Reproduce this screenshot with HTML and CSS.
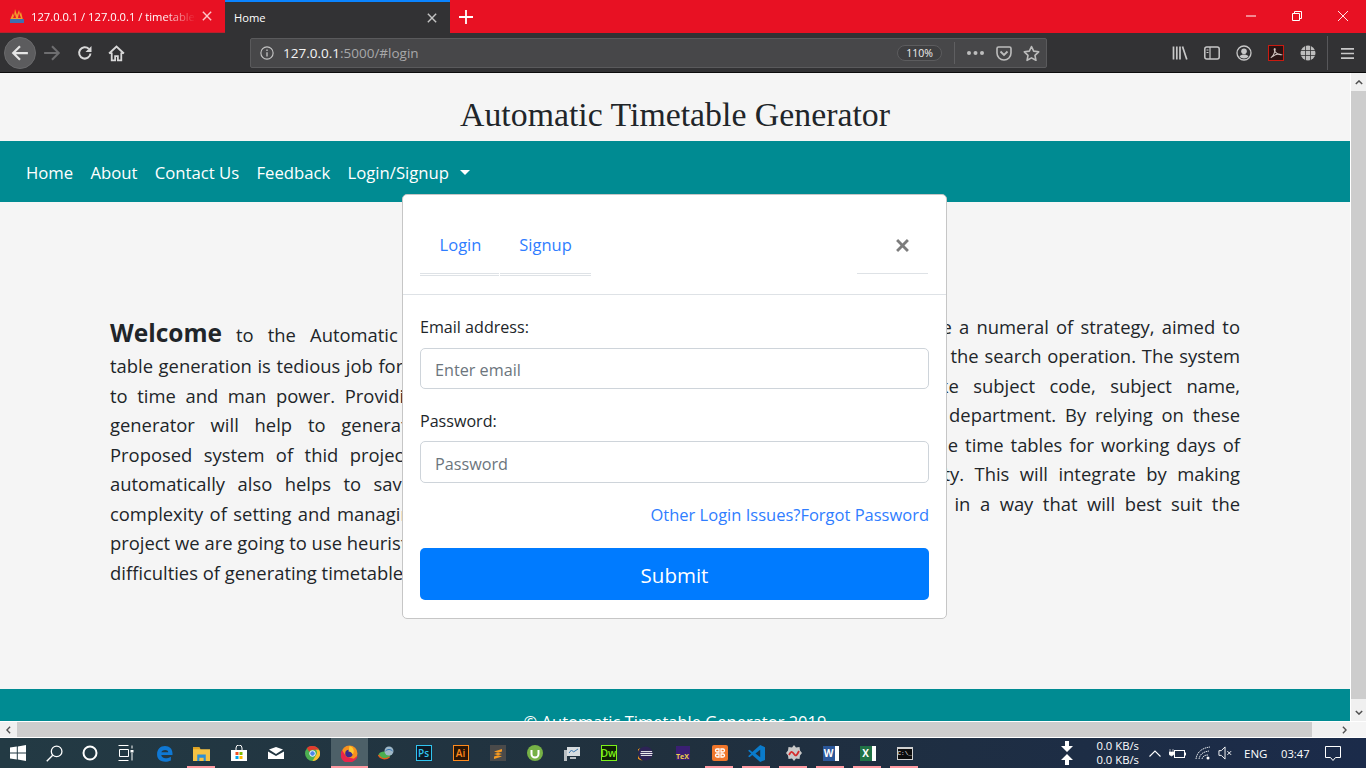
FILE: index.html
```html
<!DOCTYPE html>
<html lang="en">
<head>
<meta charset="utf-8">
<title>Home</title>
<link rel="stylesheet" href="styles.css">
</head>
<body>
<div class="screen">
  <div class="tabstrip">
    <div class="tab tab-bg">
      <svg class="favicon" viewBox="0 0 16 16"><path d="M1 12 4 5l1 3 1-7 2 6 2-5 1 4 1-2 2 8z" fill="#f39c2c"/><path d="M4 10 6 6l1 4zM9 10l1-5 2 5z" fill="#e8112d"/><rect x="1" y="11" width="14" height="4" fill="#3f6fb0"/></svg>
      <span class="tab-title fade">127.0.0.1 / 127.0.0.1 / timetables</span>
      <svg class="tab-x" viewBox="0 0 12 12"><path d="M1 1l10 10M11 1 1 11" stroke="#ffc4c8" stroke-width="1.7"/></svg>
    </div>
    <div class="tab tab-active">
      <span class="tab-title">Home</span>
      <svg class="tab-x" viewBox="0 0 12 12"><path d="M1 1l10 10M11 1 1 11" stroke="#c4c4c4" stroke-width="1.7"/></svg>
    </div>
    <svg class="newtab" viewBox="0 0 14 14"><path d="M7 0v14M0 7h14" stroke="#fff" stroke-width="1.8"/></svg>
    <div class="winctl">
      <span class="winbtn"><svg viewBox="0 0 10 10" width="10" height="10"><path d="M0 5h10" stroke="#fff"/></svg></span>
      <span class="winbtn"><svg viewBox="0 0 10 10" width="10" height="10"><path d="M.5 2.500h7v7h-7zM2.500 2.500v-2h7v7h-2" fill="none" stroke="#fff"/></svg></span>
      <span class="winbtn"><svg viewBox="0 0 10 10" width="10" height="10"><path d="M0 0l10 10M10 0 0 10" stroke="#fff" stroke-width=".9"/></svg></span>
    </div>
  </div>

  <div class="toolbar">
    <div class="navbtns">
      <span class="backbtn"><svg viewBox="0 0 16 16" width="18" height="18"><path d="M15 8H2M8 2 2 8l6 6" fill="none" stroke="#e6e6e6" stroke-width="2"/></svg></span>
      <span class="tbtn"><svg viewBox="0 0 16 16" width="18" height="18"><path d="M1 8h13M8 2l6 6-6 6" fill="none" stroke="#6e6e70" stroke-width="1.8"/></svg></span>
      <span class="tbtn tbtn-reload"><svg viewBox="0 0 16 16" width="16" height="16"><path d="M13.500 8.500a5.700 5.700 0 1 1-1.600-4.600" fill="none" stroke="#d8d8d8" stroke-width="2"/><path d="M14.500 1v6h-6z" fill="#d8d8d8"/></svg></span>
      <span class="tbtn"><svg viewBox="0 0 16 16" width="17" height="17"><path d="M1 8l7-6.500L15 8M3.500 7v7.500h3.200v-4h2.600v4h3.200V7" fill="none" stroke="#d8d8d8" stroke-width="1.7"/></svg></span>
    </div>
    <div class="urlbar">
      <svg class="url-info" viewBox="0 0 16 16" width="14" height="14"><circle cx="8" cy="8" r="7" fill="none" stroke="#c4c4c4" stroke-width="1.3"/><path d="M8 7v5M8 4v1.600" stroke="#c4c4c4" stroke-width="1.5"/></svg>
      <span class="url-text"><span class="url-host">127.0.0.1</span>:5000/#login</span>
      <span class="zoompill">110%</span>
      <span class="url-sep"></span>
      <svg class="url-dots" viewBox="0 0 17 4" width="17" height="4"><circle cx="2" cy="2" r="2" fill="#bdbdbd"/><circle cx="8.500" cy="2" r="2" fill="#bdbdbd"/><circle cx="15" cy="2" r="2" fill="#bdbdbd"/></svg>
      <svg class="url-pocket" viewBox="0 0 16 16" width="16" height="16"><path d="M1 3.500c0-1 .6-1.500 1.500-1.500h11c.9 0 1.500.5 1.500 1.500V8a7 7 0 0 1-14 0z" fill="none" stroke="#bdbdbd" stroke-width="1.600"/><path d="M4.500 6.500 8 10l3.500-3.500" fill="none" stroke="#bdbdbd" stroke-width="1.800"/></svg>
      <svg class="url-star" viewBox="0 0 18 18" width="17" height="17"><path d="M9 1.600l2.300 4.900 5.300.7-3.900 3.700 1 5.300L9 13.600l-4.700 2.600 1-5.300L1.400 7.200l5.300-.7z" fill="none" stroke="#bdbdbd" stroke-width="1.700" stroke-linejoin="round"/></svg>
    </div>
    <div class="tools">
      <span class="tool"><svg viewBox="0 0 16 16" width="16" height="16"><path d="M1.500 1.500v13M4.800 1.500v13M8 1.500v13M10.500 1.500l4.300 13" stroke="#c8c8c8" stroke-width="1.700" fill="none"/></svg></span>
      <span class="tool"><svg viewBox="0 0 16 16" width="16" height="16"><rect x=".8" y="2" width="14.400" height="12" rx="2" fill="none" stroke="#c8c8c8" stroke-width="1.500"/><path d="M6 2v12M2.500 5h2M2.500 7.500h2" stroke="#c8c8c8" stroke-width="1.200"/></svg></span>
      <span class="tool"><svg viewBox="0 0 16 16" width="16" height="16"><circle cx="8" cy="8" r="7" fill="none" stroke="#c8c8c8" stroke-width="1.300"/><circle cx="8" cy="6.300" r="2.800" fill="#c8c8c8"/><path d="M3.500 11.500c1-1.600 2.800-2.100 4.500-2.100s3.500.5 4.500 2.100c-1 1.300-2.700 2-4.500 2s-3.500-.7-4.500-2z" fill="#c8c8c8"/></svg></span>
      <span class="tool"><span class="pdf"><svg viewBox="0 0 16 16" width="14" height="14"><path d="M2 13.500c2-1 4-4.500 5-9 .3-1.500-.5-2-1-1-.5 2 3 7 8 6.500-3-1.500-7.500 0-10.500 2.500" fill="none" stroke="#d0c4c0" stroke-width="1.200"/></svg></span></span>
      <span class="tool"><svg viewBox="0 0 16 16" width="16" height="16"><circle cx="8" cy="8" r="7.500" fill="#bdbdbd"/><path d="M.5 5.500h15M.5 10.500h15M5.500.8v14.400M10.500.8v14.400" stroke="#323234" stroke-width=".8"/></svg></span>
      <span class="tool-sep"></span>
      <span class="tool"><svg viewBox="0 0 14 14" width="13" height="13"><path d="M0 2h14M0 7h14M0 12h14" stroke="#c8c8c8" stroke-width="1.800"/></svg></span>
    </div>
  </div>

  <div class="viewport">
    <div class="page">
      <header class="site-head"><h1 class="site-title">Automatic Timetable Generator</h1></header>
      <nav class="site-nav">
        <a class="nav-link">Home</a>
        <a class="nav-link">About</a>
        <a class="nav-link">Contact Us</a>
        <a class="nav-link">Feedback</a>
        <a class="nav-link">Login/Signup<span class="caret"></span></a>
      </nav>
      <main class="site-main">
        <div class="col col-left">
          <p class="ln ln-first"><strong class="welcome">Welcome</strong> to the Automatic Timetable Generator. Here</p>
          <p class="ln">table generation is tedious job for every educator of the college</p>
          <p class="ln">to time and man power. Providing the automatic time table</p>
          <p class="ln">generator will help to generate it automatically and so</p>
          <p class="ln">Proposed system of thid project is to make use of rooms</p>
          <p class="ln">automatically also helps to save time and also reduces it</p>
          <p class="ln">complexity of setting and managing timetable manually. In this</p>
          <p class="ln">project we are going to use heuristic approach to help tackle the</p>
          <p class="ln ln-last">difficulties of generating timetable.</p>
        </div>
        <div class="col col-right">
          <p class="ln">Our new tool can incorporate a numeral of strategy, aimed to</p>
          <p class="ln">that improve the efficiency of the search operation. The system</p>
          <p class="ln">will take various inputs like subject code, subject name,</p>
          <p class="ln">faculty and semester of the department. By relying on these</p>
          <p class="ln">inputs it will generate possible time tables for working days of</p>
          <p class="ln">the week for teaching faculty. This will integrate by making</p>
          <p class="ln">optimal use of all resources in a way that will best suit the</p>
          <p class="ln ln-last">constraints.</p>
        </div>
      </main>
      <footer class="site-foot">© Automatic Timetable Generator 2019</footer>

      <div class="modal">
        <div class="modal-head">
          <div class="mtabs">
            <a class="mtab mtab-login">Login</a>
            <a class="mtab mtab-signup">Signup</a>
          </div>
          <div class="mclose"><svg viewBox="0 0 12 12" width="13" height="13"><path d="M1 1l10 10M11 1 1 11" stroke="#7d7d7d" stroke-width="2.600"/></svg></div>
        </div>
        <form class="modal-body">
          <label class="flabel">Email address:</label>
          <input class="finput finput-email" type="text" placeholder="Enter email">
          <label class="flabel flabel-pw">Password:</label>
          <input class="finput finput-pw" type="password" placeholder="Password">
          <div class="flinks"><a>Other Login Issues?</a><a>Forgot Password</a></div>
          <button class="submit" type="button">Submit</button>
        </form>
      </div>
    </div>
    <div class="vscroll">
      <span class="sb-btn"><svg viewBox="0 0 10 6" width="8" height="5"><path d="M1 5l4-4 4 4" fill="none" stroke="#505050" stroke-width="1.800"/></svg></span>
      <span class="sb-thumb"></span>
      <span class="sb-btn"><svg viewBox="0 0 10 6" width="8" height="5"><path d="M1 1l4 4 4-4" fill="none" stroke="#505050" stroke-width="1.800"/></svg></span>
    </div>
  </div>

  <div class="hscroll">
    <span class="hb-btn"><svg viewBox="0 0 6 10" width="5" height="8"><path d="M5 1 1 5l4 4" fill="none" stroke="#505050" stroke-width="1.800"/></svg></span>
    <span class="hb-thumb"></span>
    <span class="hb-rest"><svg viewBox="0 0 6 10" width="5" height="8"><path d="M1 1l4 4-4 4" fill="none" stroke="#505050" stroke-width="1.800"/></svg></span>
    <span class="hb-corner"></span>
  </div>

  <div class="taskbar">
    <span class="sys"><svg viewBox="0 0 16 16" width="16" height="16"><path d="M0 2.500 6.800 1.500v6H0zM7.800 1.400 16 0v7.500H7.800zM0 8.500h6.800v6L0 13.500zM7.800 8.500H16V16l-8.200-1.400z" fill="#fff"/></svg></span>
    <span class="sys"><svg viewBox="0 0 16 16" width="17" height="17"><circle cx="10" cy="6" r="5" fill="none" stroke="#fff" stroke-width="1.200"/><path d="M6.300 9.700 .7 15.300" stroke="#fff" stroke-width="1.300"/></svg></span>
    <span class="sys"><svg viewBox="0 0 16 16" width="16" height="16"><circle cx="8" cy="8" r="6.500" fill="none" stroke="#fff" stroke-width="2"/></svg></span>
    <span class="sys"><svg viewBox="0 0 16 16" width="16" height="16"><path d="M.5.500h10M.5 15.500h10M1.500 4.500h9v7h-9zM14 .5v3M14 8v7.500" fill="none" stroke="#fff"/><rect x="12.500" y="5" width="3" height="2.500" fill="#fff"/></svg></span>
    <span class="apps">
      <span class="app"><svg viewBox="0 0 16 16" width="17" height="17"><path d="M1 9c0-5 3-8 7.500-8C13 1 16 4 15.500 9.500H5c.2 3 4.500 4 9 1.500v3.500c-5 2.500-13 1.500-13-5.500zM5 6.800h6.500C11.500 4 6 4 5 6.800z" fill="#0f78d4"/></svg></span>
      <span class="app app-open"><svg viewBox="0 0 16 14" width="17" height="15"><path d="M0 1h6l1 2h9v11H0z" fill="#f5c244"/><path d="M0 1h6l1 2H0z" fill="#e3a31f"/><path d="M4 8h8v6h-2v-3H6v3H4z" fill="#2d8fd5"/></svg></span>
      <span class="app"><svg viewBox="0 0 16 16" width="16" height="16"><path d="M0 5h16v11H0z" fill="#fff"/><path d="M5 5V3a3 3 0 0 1 6 0v2" fill="none" stroke="#fff"/><rect x="4.500" y="7" width="3" height="3" fill="#f25022"/><rect x="8.500" y="7" width="3" height="3" fill="#7fba00"/><rect x="4.500" y="11" width="3" height="3" fill="#00a4ef"/><rect x="8.500" y="11" width="3" height="3" fill="#ffb900"/></svg></span>
      <span class="app"><svg viewBox="0 0 16 12" width="16" height="12"><path d="M0 12V4.500L8 9l8-4.500V12zM1 2.500 8 0l7 2.500L8 7z" fill="#fff"/></svg></span>
      <span class="app"><svg viewBox="0 0 16 16" width="15" height="15"><circle cx="8" cy="8" r="8" fill="#4caf50"/><path d="M8 0a8 8 0 0 1 7 4H8a4 4 0 0 0-3.500 2L2 2a8 8 0 0 1 6-2z" fill="#e33b2e"/><path d="M15 4a8 8 0 0 1-7 12l3.500-6a4 4 0 0 0 0-6z" fill="#fbc02d"/><circle cx="8" cy="8" r="3" fill="#4a86e8" stroke="#fff"/></svg></span>
      <span class="app app-open app-current"><svg viewBox="0 0 16 16" width="17" height="17"><circle cx="8" cy="8" r="7.500" fill="#f7901e"/><path d="M1 5a7.500 7.500 0 0 0 11 10c2-1 3.500-3 3.500-5L12 13 5 11z" fill="#e8254b"/><circle cx="7.500" cy="8" r="3.500" fill="#3b2a8c"/><path d="M8 1c4 1 5 5 3 8-1-2-2-3-4-3z" fill="#ffcb2e"/></svg></span>
      <span class="app"><svg viewBox="0 0 16 14" width="17" height="14"><ellipse cx="6" cy="9" rx="6" ry="3.500" fill="#4caf50"/><path d="M0 9c2 4 7 5 11 2" fill="none" stroke="#e85d1e" stroke-width="1.500"/><circle cx="10.500" cy="5" r="4.500" fill="#9fb8c8"/><path d="M7 5c2-2 5-2 7 0" fill="none" stroke="#2d6fb0"/></svg></span>
      <span class="app"><span class="badge badge-ps">Ps</span></span>
      <span class="app"><span class="badge badge-ai">Ai</span></span>
      <span class="app"><span class="sublime"><svg viewBox="0 0 10 12" width="10" height="12"><path d="M1 4.500 9 2v2.500L1 7zM1 7l8 2.500V7L1 4.500zM1 9.500 9 7v2.500L1 12z" fill="#f59a22"/></svg></span></span>
      <span class="app"><svg viewBox="0 0 16 16" width="16" height="16"><circle cx="8" cy="8" r="8" fill="#76b146"/><path d="M4.500 5v4a3.500 3.500 0 0 0 7 0V5" fill="none" stroke="#fff" stroke-width="2"/></svg></span>
      <span class="app"><svg viewBox="0 0 16 16" width="16" height="16"><rect x="3" y="2" width="13" height="9" fill="#d8dde0"/><path d="M5 8l2.500-3 2 2L14 4" fill="none" stroke="#3d79b0"/><rect x="0" y="5" width="3" height="11" fill="#b9bec2"/><rect x="6" y="12" width="6" height="2" fill="#b9bec2"/></svg></span>
      <span class="app"><span class="badge badge-dw">Dw</span></span>
      <span class="app"><svg viewBox="0 0 16 16" width="15" height="15"><circle cx="8" cy="8" r="7.500" fill="#2c2255"/><path d="M2.500 2A8 8 0 0 0 5 15.500 7 7 0 0 1 2.500 2z" fill="#f7941e"/><path d="M3 6h12M2.500 8h13M3 10h12" stroke="#fff"/></svg></span>
      <span class="app"><span class="tex">TeX</span></span>
      <span class="app app-open"><span class="xampp"><svg viewBox="0 0 12 12" width="12" height="12"><path d="M3 2h2v3H3a1.500 1.500 0 0 1 0-3zM9 2H7v3h2a1.500 1.500 0 0 0 0-3zM3 10h2V7H3a1.500 1.500 0 0 0 0 3zM9 10H7V7h2a1.500 1.500 0 0 1 0 3z" fill="none" stroke="#fff" stroke-width="1.300"/></svg></span></span>
      <span class="app app-open"><svg viewBox="0 0 16 16" width="17" height="17"><path d="M11.500 0 16 2v12l-4.500 2L4 9.500 1.500 11.500 0 10.500 3 8 0 5.500l1.500-1L4 6.500zM11.500 4.500 7 8l4.500 3.500z" fill="#0a7bcb"/></svg></span>
      <span class="app app-open"><svg viewBox="0 0 16 16" width="16" height="16"><path d="M8 0l2 2.500 3.500-.5.500 3.500L16 8l-2 2.500-.5 3.500-3.500-.5L8 16l-2-2.500-3.500.5L2 10.500 0 8l2-2.500.5-3.500L6 2.500z" fill="#c9c9c9"/><path d="M3 10c2-4 3-4 5-1s3 1 5-3" fill="none" stroke="#d52b2b" stroke-width="1.800"/></svg></span>
      <span class="app app-open"><span class="office office-w">W</span></span>
      <span class="app app-open"><span class="office office-x">X</span></span>
      <span class="app app-open"><span class="cmd">C:\_</span></span>
    </span>
    <span class="tray">
      <span class="tray-arrows"><svg viewBox="0 0 12 24" width="12" height="24"><path d="M4 0h4v5h4l-6 6-6-6h4zM6 13l6 6H8v5H4v-5H0z" fill="#fff"/></svg></span>
      <span class="speed"><span>0.0 KB/s</span><span>0.0 KB/s</span></span>
      <svg class="tray-up" viewBox="0 0 12 7" width="12" height="7"><path d="M.5 6.500 6 1l5.500 5.500" fill="none" stroke="#fff" stroke-width="1.100"/></svg>
      <svg class="tray-pow" viewBox="0 0 17 11" width="17" height="11"><rect x="5.500" y="2.500" width="10" height="7" fill="none" stroke="#fff"/><path d="M16.500 4.500v3" stroke="#fff"/><path d="M1 1v3M4 1v3M0 4h5v2.500L2.500 8 0 6.500z" fill="#fff" stroke="#fff" stroke-width=".6"/></svg>
      <svg class="tray-wifi" viewBox="0 0 16 14" width="16" height="14"><path d="M1 13c1-7 6-11 14-12M4 13c1-5 4-7 10-8M7 13c.5-2 2-4 6-4" fill="none" stroke="#dfe3e8" stroke-dasharray="1.500 .6"/><circle cx="13" cy="12" r="1.500" fill="#fff"/></svg>
      <svg class="tray-mute" viewBox="0 0 16 14" width="15" height="14"><path d="M1 4.500h2.500L7.500.5v13l-4-4H1z" fill="none" stroke="#fff"/><path d="M10 5l4 4M14 5l-4 4" stroke="#fff"/></svg>
      <span class="tray-lang">ENG</span>
      <span class="tray-time">03:47</span>
      <svg class="tray-note" viewBox="0 0 16 15" width="16" height="15"><path d="M.5.500h15v11h-5L8 14.500 5.500 11.500h-5z" fill="none" stroke="#fff"/></svg>
    </span>
  </div>
</div>
</body>
</html>
```

FILE: styles.css
```css
* { box-sizing: border-box; }
html, body { margin: 0; padding: 0; height: 100%; overflow: hidden; }
body { font-family: "Open Sans", "Noto Sans", sans-serif; color: #212529; background: #000; }
p, h1 { margin: 0; }
svg { display: block; flex: none; }

.screen { width: 1366px; height: 768px; display: flex; flex-direction: column; overflow: hidden; }

/* tab strip */
.tabstrip { height: 33px; flex: none; display: flex; align-items: stretch; background: #e81123; }
.tab { width: 225px; display: flex; align-items: center; font-size: 11.200px; color: #fff; position: relative; }
.tab-bg { padding-left: 9px; border-bottom: 1px solid #b8202c; }
.tab-active { background: #323234; border-top: 2px solid #0a84ff; padding-left: 9px; }
.favicon { width: 16px; height: 16px; margin-right: 6px; }
.tab-title { flex: 1; white-space: nowrap; overflow: hidden; }
.fade { -webkit-mask-image: linear-gradient(to right, #000 80%, transparent); mask-image: linear-gradient(to right, #000 80%, transparent); }
.tab-x { width: 10px; height: 10px; margin: 0 13px 0 7px; }
.tab-bg .tab-x { margin-left: 6px; }
.newtab { width: 14px; height: 14px; margin: 9.500px 0 0 9px; }
.winctl { margin-left: auto; display: flex; }
.winbtn { width: 46px; display: flex; align-items: center; justify-content: center; padding-bottom: 1px; }

/* toolbar */
.toolbar { height: 40px; flex: none; display: flex; align-items: center; background: #323234; border-bottom: 1px solid #0c0c0d; padding-top: 1px; }
.navbtns { display: flex; align-items: center; width: 250px; padding-left: 4px; }
.backbtn { width: 32px; height: 32px; border-radius: 50%; background: #5c5c5e; border: 1px solid #6a6a6c; display: flex; align-items: center; justify-content: center; }
.tbtn { width: 32px; height: 32px; display: flex; align-items: center; justify-content: center; }
.tbtn-reload { padding-left: 2px; }
.urlbar { width: 797px; height: 30px; display: flex; align-items: center; background: #474749; border: 1px solid #5a5a5c; border-radius: 2px; padding-left: 9px; }
.url-info { margin-right: 9px; }
.url-text { font-size: 13.500px; color: #a8a8aa; flex: 1; white-space: nowrap; }
.url-host { color: #f4f4f4; }
.zoompill { width: 45px; height: 16px; border-radius: 8px; border: 1px solid #5c5c5e; font-size: 10.500px; line-height: 14px; text-align: center; color: #f0f0f0; background: #3f3f41; margin-right: 12px; }
.url-sep { width: 1px; height: 22px; background: #5f5f61; margin-right: 12px; }
.url-dots { margin-right: 12px; }
.url-pocket { margin-right: 11px; }
.url-star { margin-right: 6px; }
.tools { display: flex; align-items: center; margin-left: 117px; }
.tool { width: 32px; display: flex; align-items: center; justify-content: center; }
.tool-sep { width: 1px; height: 34px; background: #57575a; margin: 0 3px 0 3px; }
.pdf { width: 16px; height: 16px; background: #2a1414; border: 1px solid #c91a10; display: flex; align-items: center; justify-content: center; }

/* viewport */
.viewport { height: 648px; flex: none; display: flex; }
.page { flex: 1; position: relative; overflow: hidden; background: #f5f5f5; }
.site-head { height: 68px; display: flex; align-items: center; justify-content: center; padding-top: 16px; }
.site-title { font-family: "Liberation Serif", serif; font-weight: 400; font-size: 33.800px; line-height: 40px; color: #212529; }
.site-nav { height: 61px; background: #008b92; display: flex; align-items: center; padding: 2px 0 0 26px; gap: 17.300px; }
.nav-link { color: #fff; font-size: 16.700px; white-space: nowrap; display: flex; align-items: center; }
.caret { width: 0; height: 0; margin-left: 11px; border-top: 5px solid #fff; border-left: 5px solid transparent; border-right: 5px solid transparent; }

.site-main { height: 487px; display: grid; grid-template-columns: 550px 550px; column-gap: 30px; padding: 0 0 0 110px; }
.col { min-width: 0; }
.col-left { padding-top: 114px; }
.col-right { padding-top: 109.500px; }
.ln { font-size: 18.400px; line-height: 29.500px; text-align: justify; text-align-last: justify; white-space: nowrap; color: #212529; }
.ln-last { text-align-last: left; }
.ln-first { line-height: 33px; }
.welcome { font-size: 24.500px; font-weight: 700; }

.site-foot { height: 60px; background: #008b92; color: #fff; font-size: 16.500px; text-align: center; padding-top: 21px; line-height: 24px; }

/* modal */
.modal { position: absolute; left: 402px; top: 121px; width: 545px; height: 425px; background: #fff; border: 1px solid #c6c6c6; border-radius: 5px; }
.modal-head { height: 100px; border-bottom: 1px solid #dee2e6; display: flex; justify-content: space-between; padding: 0 17px; }
.mtabs { display: flex; gap: 1px; height: 81px; }
.mtab { height: 81px; color: #2f7dff; font-size: 16.500px; border-bottom: 3px double #dee2e6; display: flex; justify-content: center; padding-top: 38px; line-height: 24px; }
.mtab-login { width: 79px; padding-left: 2px; }
.mtab-signup { width: 91px; }
.mclose { width: 71px; height: 79px; margin-right: 1px; border-bottom: 1px solid #dee2e6; display: flex; justify-content: center; align-items: flex-start; padding: 44px 0 0 19px; }
.modal-body { padding: 20px 17px 0; display: flex; flex-direction: column; }
.flabel { font-size: 16.100px; line-height: 24px; color: #212529; }
.flabel-pw { margin-top: 20px; }
.finput { width: 509px; border: 1px solid #ced4da; border-radius: 5px; background: #fff; padding: 3px 14px 0; font-family: inherit; font-size: 16.200px; color: #495057; margin-top: 9px; outline: none; }
.finput::placeholder { color: #6c757d; opacity: 1; }
.finput-email { height: 41px; }
.finput-pw { height: 42px; margin-top: 8px; }
.flinks { margin-top: 20px; height: 24px; line-height: 24px; text-align: right; font-size: 16.500px; color: #2f7dff; white-space: nowrap; }
.submit { margin-top: 21px; height: 52px; width: 509px; background: #007bff; border: 0; border-radius: 5px; color: #fff; font-family: inherit; font-size: 20.500px; padding-top: 3px; }

/* scrollbars */
.vscroll { width: 16px; background: #f0f0f0; display: flex; flex-direction: column; align-items: center; border-left: 1px solid #fff; }
.sb-btn { height: 18px; width: 100%; display: flex; align-items: center; justify-content: center; }
.sb-thumb { flex: 1; width: 100%; background: #cdcdcd; margin-bottom: 4px; }
.hscroll { height: 17px; flex: none; display: flex; border-top: 1px solid #fff; border-bottom: 1px solid #fff; background: #f0f0f0; }
.hb-btn { width: 17px; display: flex; align-items: center; justify-content: center; }
.hb-thumb { width: 1295px; background: #cdcdcd; }
.hb-rest { width: 38px; display: flex; align-items: center; justify-content: flex-end; padding-right: 3px; }
.hb-corner { flex: 1; background: #f5f5f5; }

/* taskbar */
.taskbar { flex: 1; display: flex; align-items: center; background: linear-gradient(to right, #233a44, #20303e 50%, #1b2b4a); color: #fff; }
.sys { width: 36px; height: 30px; display: flex; align-items: center; justify-content: center; }
.apps { display: flex; margin-left: 2px; }
.app { width: 37px; height: 30px; display: flex; align-items: center; justify-content: center; position: relative; }
.app-open::after { content: ""; position: absolute; left: 4px; right: 5px; bottom: 0; height: 2px; background: #ff9aa2; }
.app-current { background: #4d6068; }
.app-current::after { left: 0; right: 0; }
.badge { width: 16px; height: 16px; display: flex; align-items: center; justify-content: center; font-size: 10px; font-weight: 600; border: 1px solid; line-height: 1; background: #0d1a26; }
.badge-ps { color: #31c5f0; border-color: #31c5f0; }
.badge-ai { color: #ff8a1c; border-color: #ff8a1c; background: #2b1605; }
.badge-dw { color: #7cf01a; border-color: #7cf01a; background: #0f2204; }
.sublime { width: 16px; height: 16px; background: #4a4a4a; display: flex; align-items: center; justify-content: center; }
.tex { width: 14px; height: 14px; background: #3a1f73; color: #f2d14a; font-size: 7px; font-weight: 700; display: flex; align-items: flex-end; justify-content: center; line-height: 1; }
.xampp { width: 16px; height: 16px; border-radius: 2px; background: #f0762a; display: flex; align-items: center; justify-content: center; }
.office { width: 16px; height: 15px; display: flex; align-items: center; justify-content: center; font-size: 10px; font-weight: 700; color: #fff; border-right: 4px solid #fff; }
.office-w { background: #2b579a; }
.office-x { background: #217346; }
.cmd { width: 16px; height: 13px; background: #0c0c0c; border: 1px solid #d0d0d0; border-top-width: 2px; font-family: "Liberation Mono", monospace; font-size: 6px; color: #fff; line-height: 9px; text-align: center; white-space: nowrap; overflow: hidden; }

.tray { margin-left: auto; display: flex; align-items: center; height: 30px; }
.tray-arrows { margin-right: 23px; }
.speed { display: flex; flex-direction: column; align-items: flex-end; font-size: 11.300px; line-height: 14px; width: 43px; margin-right: 10px; }
.tray-up { margin-right: 8px; }
.tray-pow { margin-right: 9px; }
.tray-wifi { margin-right: 7px; }
.tray-mute { margin-right: 11px; }
.tray-lang { font-size: 11.500px; width: 24px; margin-right: 13px; }
.tray-time { font-size: 11.200px; width: 28px; margin-right: 16px; }
.tray-note { margin-right: 25px; }
```
